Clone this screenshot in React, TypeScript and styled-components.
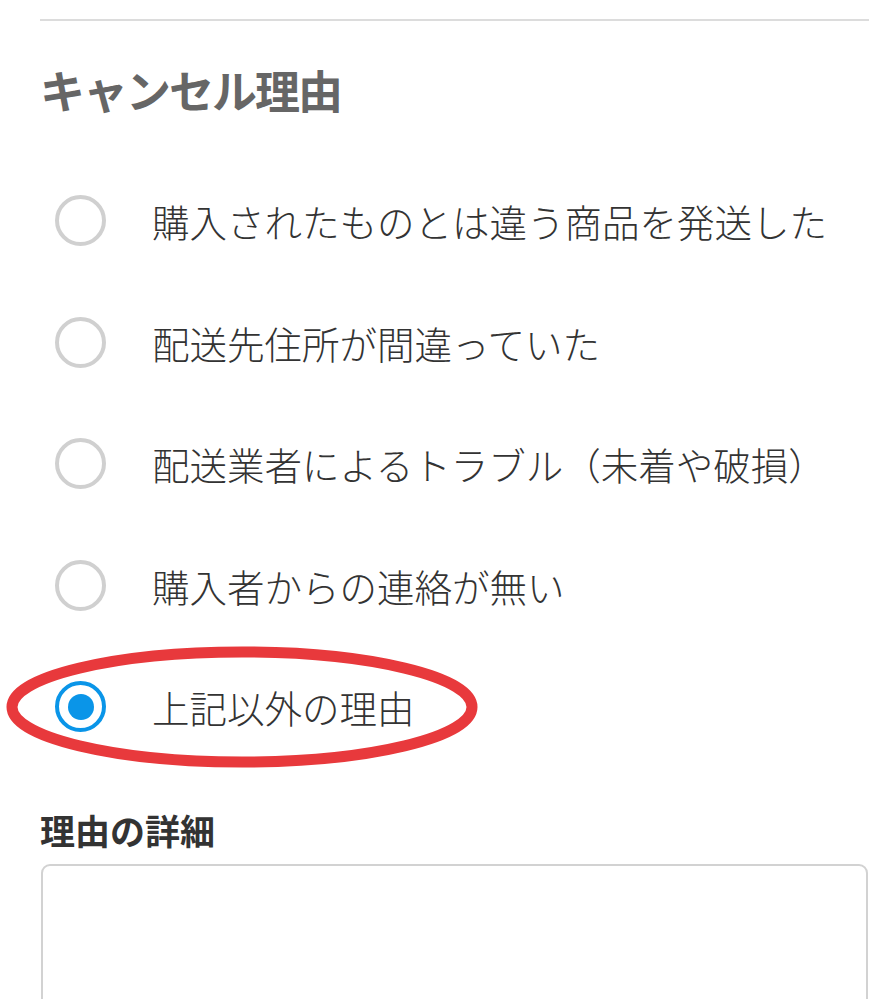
import React, { useState } from "react";
import styled, { createGlobalStyle } from "styled-components";

const GlobalStyle = createGlobalStyle`
  html, body {
    margin: 0;
    padding: 0;
    background: #ffffff;
  }
  body {
    font-family: "Noto Sans CJK JP", "Noto Sans", sans-serif;
    color: #333333;
  }
`;

const Page = styled.div`
  padding: 19px 29px 0 40px;
  width: 896px;
  box-sizing: border-box;
  overflow: hidden;
  height: 999px;
`;

const Divider = styled.hr`
  margin: 0;
  border: none;
  height: 2px;
  background: #dcdcdc;
  margin-right: -2px;
`;

const Title = styled.h2`
  margin: 39px 0 40px;
  height: 60px;
  line-height: 60px;
  font-size: 45px;
  font-weight: 700;
  letter-spacing: -2px;
  color: #666666;
`;

const OptionList = styled.div`
  display: flex;
  flex-direction: column;
`;

const OptionRow = styled.label`
  position: relative;
  display: flex;
  align-items: center;
  height: 121.5px;
  padding-left: 15px;
  cursor: pointer;
`;

const RadioMark = styled.span<{ $checked: boolean }>`
  flex: none;
  width: 51px;
  height: 51px;
  box-sizing: border-box;
  border-radius: 50%;
  border: 4px solid ${(p) => (p.$checked ? "#0a95e8" : "#d0d0d0")};
  display: flex;
  align-items: center;
  justify-content: center;
  &::after {
    content: "";
    display: ${(p) => (p.$checked ? "block" : "none")};
    width: 26px;
    height: 26px;
    border-radius: 50%;
    background: #0a95e8;
  }
`;

const OptionText = styled.span`
  margin-left: 46px;
  font-size: 37.5px;
  font-weight: 300;
  color: #333333;
  white-space: nowrap;
`;

const Circle = styled.svg`
  position: absolute;
  left: -34px;
  top: 0;
  width: 472px;
  height: 122px;
  pointer-events: none;
`;

const SubTitle = styled.h3`
  margin: 42px 0 14px;
  height: 40px;
  line-height: 40px;
  font-size: 35px;
  font-weight: 700;
  color: #333333;
`;

const DetailBox = styled.textarea`
  display: block;
  width: 100%;
  height: 220px;
  box-sizing: border-box;
  margin-left: 1px;
  border: 2px solid #d2d2d2;
  border-radius: 9px;
  resize: none;
  outline: none;
  font-family: inherit;
  font-size: 32px;
  padding: 14px 18px;
`;

const reasons = [
  "購入されたものとは違う商品を発送した",
  "配送先住所が間違っていた",
  "配送業者によるトラブル（未着や破損）",
  "購入者からの連絡が無い",
  "上記以外の理由",
];

export default function App() {
  const [selected, setSelected] = useState(4);
  return (
    <Page>
      <GlobalStyle />
      <Divider />
      <Title>キャンセル理由</Title>
      <OptionList>
        {reasons.map((r, i) => (
          <OptionRow key={r} onClick={() => setSelected(i)}>
            <RadioMark $checked={selected === i} />
            <OptionText>{r}</OptionText>
            {i === 4 && (
              <Circle viewBox="0 0 472 122">
                <ellipse
                  cx="236"
                  cy="61"
                  rx="230"
                  ry="55"
                  fill="none"
                  stroke="#e8393c"
                  strokeWidth="11"
                />
              </Circle>
            )}
          </OptionRow>
        ))}
      </OptionList>
      <SubTitle>理由の詳細</SubTitle>
      <DetailBox />
    </Page>
  );
}
